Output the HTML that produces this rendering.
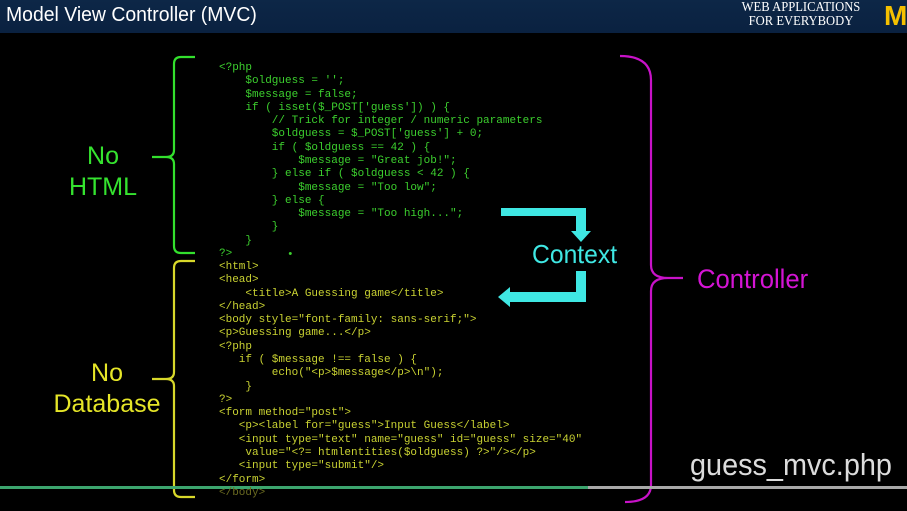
<!DOCTYPE html>
<html><head><meta charset="utf-8"><style>
html,body{margin:0;padding:0;background:#000;width:907px;height:511px;overflow:hidden;position:relative;font-family:"Liberation Sans",sans-serif}
.hdr{position:absolute;left:0;top:0;width:907px;height:33px;background:linear-gradient(#0d2747,#0a2140);}
.t{position:absolute;left:6px;top:4px;color:#fff;font-size:20px;transform:scaleX(.97);transform-origin:left;white-space:nowrap}
.wa{position:absolute;left:728px;top:1px;width:146px;text-align:center;color:#fff;font-family:"Liberation Serif",serif;font-size:14px;line-height:14px;transform:scaleX(.9)}
.M{position:absolute;left:884px;top:2px;color:#f5c000;font-family:"Liberation Sans",sans-serif;font-weight:bold;font-size:28px;line-height:28px}
.c{position:absolute;font-family:"Liberation Mono",monospace;font-size:11px;white-space:pre;line-height:13.28px}
.g{color:#3ccf2e}.y{color:#c9d232}
.lbl{position:absolute;font-size:25px;text-align:center;line-height:31px}
</style></head><body>
<div class="hdr"><div class="t">Model View Controller (MVC)</div><div class="wa">WEB APPLICATIONS<br>FOR EVERYBODY</div><div class="M">M</div></div>

<svg width="907" height="511" style="position:absolute;left:0;top:0">
<g fill="none" stroke-width="2.2">
<path d="M195 57 H181 Q174 57 174 64 V150 Q174 157 166 157 H152 M166 157 Q174 157 174 164 V246 Q174 253 181 253 H195" stroke="#33e02d"/>
<path d="M195 261 H181 Q174 261 174 268 V372 Q174 379 166 379 H152 M166 379 Q174 379 174 386 V490 Q174 497 181 497 H195" stroke="#d8d82a"/>
<path d="M620 56 Q651 56 651 80 V265 Q651 278 668 278 H683 M668 278 Q651 278 651 291 V485 Q651 502 625 502" stroke="#c812c8"/>
</g>
<g fill="#3fe7e3">
<path d="M501 208 H586 V231 H591 L581 242 L571 231 H576 V216 H501 Z"/>
<path d="M576 271 H586 V302 H510 V307 L498 297 L510 287 V292 H576 Z"/>
</g>
<rect x="0" y="486" width="588" height="3" fill="#3ca56e"/>
<rect x="588" y="486" width="319" height="3" fill="#a8a8a8"/>
</svg>

<div class="c g" style="left:219px;top:62px">&lt;?php
    $oldguess = '';
    $message = false;
    if ( isset($_POST['guess']) ) {
        // Trick for integer / numeric parameters
        $oldguess = $_POST['guess'] + 0;
        if ( $oldguess == 42 ) {
            $message = "Great job!";
        } else if ( $oldguess &lt; 42 ) {
            $message = "Too low";
        } else {
            $message = "Too high...";
        }
    }
?&gt;</div>
<div class="c g" style="left:287px;top:249px">•</div>
<div class="c y" style="left:219px;top:261px">&lt;html&gt;
&lt;head&gt;
    &lt;title&gt;A Guessing game&lt;/title&gt;
&lt;/head&gt;
&lt;body style="font-family: sans-serif;"&gt;
&lt;p&gt;Guessing game...&lt;/p&gt;
&lt;?php
   if ( $message !== false ) {
        echo("&lt;p&gt;$message&lt;/p&gt;\n");
    }
?&gt;
&lt;form method="post"&gt;
   &lt;p&gt;&lt;label for="guess"&gt;Input Guess&lt;/label&gt;
   &lt;input type="text" name="guess" id="guess" size="40"
    value="&lt;?= htmlentities($oldguess) ?&gt;"/&gt;&lt;/p&gt;
   &lt;input type="submit"/&gt;
&lt;/form&gt;
<span style="color:#6a6a20">&lt;/body&gt;</span></div>

<div class="lbl" style="left:53px;top:141px;width:100px;color:#35e32f">No<br>HTML</div>
<div class="lbl" style="left:50px;top:358px;width:114px;color:#e6e628">No<br>Database</div>
<div class="lbl" style="left:532px;top:239px;color:#3fe7e3;font-size:26px;transform:scaleX(.95);transform-origin:left">Context</div>
<div class="lbl" style="left:697px;top:264px;color:#d414d4;font-size:27px;transform:scaleX(.95);transform-origin:left">Controller</div>
<div style="position:absolute;left:690px;top:447px;color:#dcdcdc;font-size:31px;white-space:nowrap;transform:scaleX(.93);transform-origin:left">guess_mvc.php</div>
</body></html>
